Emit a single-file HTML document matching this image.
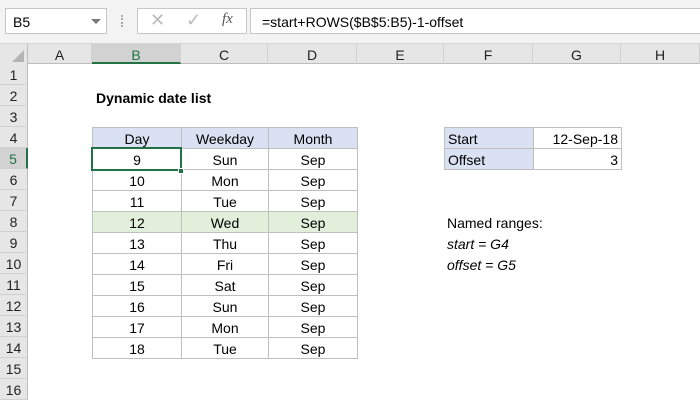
<!DOCTYPE html><html><head><style>
body{margin:0;width:700px;height:400px;overflow:hidden;background:#fff;font-family:"Liberation Sans",sans-serif;position:relative}
.a{position:absolute;box-sizing:border-box}
.t{font-size:14px;color:#000}
</style></head><body>
<div class="a" style="left:0;top:0;width:700px;height:44px;background:#f3f3f3;border-bottom:1px solid #d4d4d4"></div>
<div class="a t" style="left:5px;top:8px;width:102px;height:26px;background:#fff;border:1px solid #c6c6c6;padding:5px 0 0 7px">B5</div>
<div class="a" style="left:91px;top:19px;border:5px solid transparent;border-top:5px solid #777"></div>
<div class="a" style="left:121px;top:15px;width:2px;height:12px;border-left:2px dotted #aaa"></div>
<div class="a" style="left:137px;top:8px;width:110px;height:26px;background:#fff;border:1px solid #c6c6c6"></div>
<div class="a" style="left:150px;top:10px;font-size:18px;color:#bbb">✕</div>
<div class="a" style="left:186px;top:10px;font-size:18px;color:#bbb">✓</div>
<div class="a" style="left:222px;top:11px;font-size:15px;font-style:italic;font-family:'Liberation Serif',serif;color:#555">fx</div>
<div class="a t" style="left:250px;top:8px;width:452px;height:26px;background:#fff;border:1px solid #c6c6c6;padding:5px 0 0 11px">=start+ROWS($B$5:B5)-1-offset</div>
<div id="g"></div>
<script>
const cols=[["A",28,92],["B",92,181],["C",181,268],["D",268,357],["E",357,444],["F",444,533],["G",533,621],["H",621,700]];
let h='';
h+=`<div class="a" style="left:0;top:44px;width:700px;height:20px;background:#e6e6e6;border-bottom:1px solid #bdbdbd"></div>`;
h+=`<div class="a" style="left:0;top:44px;width:28px;height:356px;background:#e6e6e6;border-right:1px solid #bdbdbd"></div>`;
h+=`<div class="a" style="left:12px;top:50px;border-left:12px solid transparent;border-bottom:12px solid #b4b4b4"></div>`;
for(const[c,l,r]of cols){const sel=c=="B";h+=`<div class="a t" style="left:${l}px;top:44px;width:${r-l}px;height:20px;border-right:1px solid #d0d0d0;text-align:center;padding-top:3px;${sel?'background:#d2d2d2;color:#217346;border-bottom:2px solid #217346':'color:#222'}">${c}</div>`;}
for(let i=1;i<=16;i++){const y=64+(i-1)*21;const sel=i==5;h+=`<div class="a t" style="left:0;top:${y}px;width:28px;height:21px;border-bottom:1px solid #d0d0d0;text-align:center;padding-top:3px;${sel?'background:#d2d2d2;color:#217346;border-right:2px solid #217346':'color:#222;border-right:1px solid #bdbdbd'}">${i}</div>`;}
h+=`<div class="a t" style="left:96px;top:90px;font-weight:bold">Dynamic date list</div>`;
const wd=["Sun","Mon","Tue","Wed","Thu","Fri","Sat","Sun","Mon","Tue"];
const rows=[["Day","Weekday","Month"]];for(let i=0;i<10;i++)rows.push([9+i,wd[i],"Sep"]);
rows.forEach((rw,i)=>{const y=127+i*21;const bg=i==0?'#d9e1f2':(i==4?'#e2efda':'#fff');
[[92,181],[181,268],[268,357]].forEach(([l,r],j)=>{h+=`<div class="a t" style="left:${l}px;top:${y}px;width:${r-l+1}px;height:22px;border:1px solid #bfbfbf;background:${bg};text-align:center;padding-top:3px">${rw[j]}</div>`;});});
h+=`<div class="a" style="left:91px;top:147px;width:91px;height:24px;border:2px solid #217346"></div><div class="a" style="left:178px;top:168px;width:6px;height:6px;background:#217346;border:1px solid #fff"></div>`;
[["Start","12-Sep-18"],["Offset","3"]].forEach((rw,i)=>{const y=127+i*21;h+=`<div class="a t" style="left:444px;top:${y}px;width:90px;height:22px;border:1px solid #bfbfbf;background:#d9e1f2;padding:3px 0 0 3px">${rw[0]}</div><div class="a t" style="left:533px;top:${y}px;width:89px;height:22px;border:1px solid #bfbfbf;text-align:right;padding:3px 3px 0 0">${rw[1]}</div>`;});
h+=`<div class="a t" style="left:447px;top:215px">Named ranges:</div><div class="a t" style="left:447px;top:236px;font-style:italic">start = G4</div><div class="a t" style="left:447px;top:257px;font-style:italic">offset = G5</div>`;
document.getElementById('g').innerHTML=h;
</script>
</body></html>
